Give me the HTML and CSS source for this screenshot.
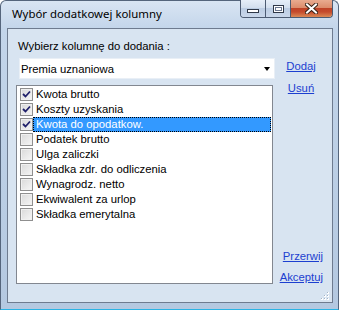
FILE: index.html
```html
<!doctype html>
<html lang="pl">
  <head>
    <meta charset="utf-8">
    <title>Wybór dodatkowej kolumny</title>
    <link rel="stylesheet" href="styles.css">
  </head>
  <body>
    <div class="window">
      <!-- pasek tytułu -->
      <div class="titlebar">
        <span class="title">Wybór dodatkowej kolumny</span>
        <div class="caption-buttons">
          <span class="cap-btn cap-min"><span class="min-glyph"></span></span>
          <span class="cap-btn cap-max"><span class="max-glyph"></span></span>
          <span class="cap-btn cap-close">
            <svg width="13" height="11" viewBox="0 0 13 11">
              <path d="M2 1.5 L11 9.5 M11 1.5 L2 9.5" stroke="#3a2418" stroke-width="4" stroke-linecap="square"/>
              <path d="M2 1.5 L11 9.5 M11 1.5 L2 9.5" stroke="#fff" stroke-width="2" stroke-linecap="square"/>
            </svg>
          </span>
        </div>
      </div>

      <!-- obszar klienta -->
      <div class="client">
        <div class="label">Wybierz kolumnę do dodania :</div>

        <div class="row">
          <div class="col-left">
            <div class="combo">
              <span>Premia uznaniowa</span>
              <span class="combo-arrow"></span>
            </div>

            <ul class="list">
              <li class="item"><span class="check checked"></span><span class="item-text">Kwota brutto</span></li>
              <li class="item"><span class="check checked"></span><span class="item-text">Koszty uzyskania</span></li>
              <li class="item"><span class="check checked"></span><span class="item-text selected">Kwota do opodatkow.</span></li>
              <li class="item"><span class="check"></span><span class="item-text">Podatek brutto</span></li>
              <li class="item"><span class="check"></span><span class="item-text">Ulga zaliczki</span></li>
              <li class="item"><span class="check"></span><span class="item-text">Składka zdr. do odliczenia</span></li>
              <li class="item"><span class="check"></span><span class="item-text">Wynagrodz. netto</span></li>
              <li class="item"><span class="check"></span><span class="item-text">Ekwiwalent za urlop</span></li>
              <li class="item"><span class="check"></span><span class="item-text">Składka emerytalna</span></li>
            </ul>
          </div>

          <div class="col-links">
            <div class="links-top">
              <a href="#">Dodaj</a>
              <a href="#">Usuń</a>
            </div>
            <div class="links-bottom">
              <a href="#">Przerwij</a>
              <a href="#">Akceptuj</a>
            </div>
          </div>
        </div>

        <!-- uchwyt zmiany rozmiaru -->
        <svg class="grip" width="8" height="8" viewBox="0 0 8 8">
          <rect x="6" y="0" width="2" height="2" fill="#fff"/>
          <rect x="3" y="3" width="2" height="2" fill="#fff"/>
          <rect x="6" y="3" width="2" height="2" fill="#fff"/>
          <rect x="0" y="6" width="2" height="2" fill="#fff"/>
          <rect x="3" y="6" width="2" height="2" fill="#fff"/>
          <rect x="6" y="6" width="2" height="2" fill="#fff"/>
          <rect x="6" y="0" width="1" height="1" fill="#a4b3c6"/>
          <rect x="3" y="3" width="1" height="1" fill="#a4b3c6"/>
          <rect x="6" y="3" width="1" height="1" fill="#a4b3c6"/>
          <rect x="0" y="6" width="1" height="1" fill="#a4b3c6"/>
          <rect x="3" y="6" width="1" height="1" fill="#a4b3c6"/>
          <rect x="6" y="6" width="1" height="1" fill="#a4b3c6"/>
        </svg>
      </div>
    </div>
  </body>
</html>
```

FILE: styles.css
```css
body {
  margin: 0;
  background-color: #fff;
  font-family: "Liberation Sans", Arial, sans-serif;
  font-size: 11.3px;
}
/* okno */
.window {
  width: 339px;
  height: 310px;
  box-sizing: border-box;
  display: flex;
  flex-direction: column;
  border: 1px solid #55657c;
  border-bottom-color: #2ab3e4;
  border-radius: 6px 6px 0 0;
  background: linear-gradient(#d9e5f3, #c3d5ea 28px, #b4c8e0);
}
/* pasek tytułu */
.titlebar {
  height: 27px;
  display: flex;
  align-items: flex-start;
  padding-left: 11px;
}
.title {
  margin-top: 5px;
  font-family: "Noto Sans", sans-serif;
  font-size: 11.4px;
  line-height: 16px;
  color: #000;
}
.caption-buttons {
  display: flex;
  margin-left: auto;
  margin-right: 5px;
  margin-top: -1px;
  height: 18px;
  box-sizing: border-box;
  border: 1px solid #4c5b72;
  border-top: 0;
  border-radius: 0 0 4px 4px;
  overflow: hidden;
}
.cap-btn {
  display: flex;
  align-items: center;
  justify-content: center;
  width: 24px;
  background: linear-gradient(#e6eef8, #d3dfee 45%, #bccde3 50%, #c9d7ea);
}
.cap-btn + .cap-btn {
  border-left: 1px solid #4c5b72;
}
.cap-close {
  width: 41px;
  background: linear-gradient(#e9ab90, #dc8c6c 45%, #bf4327 50%, #c54b2d 70%, #dc8a55);
}
.min-glyph {
  width: 12px;
  height: 4px;
  margin-top: 5px;
  box-sizing: border-box;
  border: 1px solid #2f3848;
  background-color: #fff;
}
.max-glyph {
  width: 11px;
  height: 8px;
  box-sizing: border-box;
  border: 1px solid #2f3848;
  background-color: #fff;
  box-shadow: inset 0 0 0 1px #fff, inset 0 0 0 2px #6b7890;
}
/* obszar klienta */
.client {
  flex: 1;
  position: relative;
  margin: 0 5px 6px 6px;
  border: 1px solid #6e7b8f;
  background-color: #d8e4f1;
}
.label {
  margin: 11px 0 0 10px;
  line-height: 13px;
  color: #000;
}
.row {
  display: flex;
  margin-top: 5px;
  padding-left: 8px;
}
.col-left {
  width: 259px;
}
/* lista rozwijana */
.combo {
  display: flex;
  align-items: center;
  justify-content: space-between;
  width: 256px;
  height: 21px;
  margin-left: 3px;
  box-sizing: border-box;
  padding: 0 4px 0 1px;
  border: 1px solid #e9eff6;
  background-color: #fff;
}
.combo-arrow {
  width: 0;
  height: 0;
  border-top: 4px solid #000;
  border-left: 3.5px solid transparent;
  border-right: 3.5px solid transparent;
}
/* lista z polami wyboru */
.list {
  width: 257px;
  height: 199px;
  margin: 6px 0 0;
  padding: 1px 0 0 3px;
  box-sizing: border-box;
  list-style-type: none;
  border: 1px solid #828790;
  background-color: #fff;
}
.item {
  display: flex;
  align-items: center;
  height: 15px;
}
.check {
  width: 13px;
  height: 13px;
  box-sizing: border-box;
  border: 1px solid #8f8f8f;
  background: linear-gradient(135deg, #d9d9d9, #f6f6f6);
  box-shadow: inset 0 0 0 1px #f0f0f0;
}
.check.checked {
  background: url("data:image/svg+xml,%3Csvg xmlns='http://www.w3.org/2000/svg' width='11' height='11'%3E%3Cpath d='M2 5 L4.5 7.5 L9 2.5' fill='none' stroke='%2321216b' stroke-width='1.8'/%3E%3C/svg%3E") no-repeat, linear-gradient(135deg, #d9d9d9, #f6f6f6);
}
.item-text {
  flex: 1;
  height: 15px;
  line-height: 15px;
  margin-right: 1px;
  padding-left: 3px;
  color: #000;
}
.item-text.selected {
  background-color: #3399ff;
  color: #fff;
  outline: 1px dotted #000;
  outline-offset: -1px;
}
/* odnośniki */
.col-links {
  flex: 1;
  display: flex;
  flex-direction: column;
  justify-content: space-between;
  padding: 2px 9px 0 4px;
}
.links-top {
  display: flex;
  flex-direction: column;
  align-items: center;
  gap: 9px;
}
.links-bottom {
  display: flex;
  flex-direction: column;
  align-items: flex-end;
  gap: 8px;
}
.col-links a {
  line-height: 13px;
  color: #1c3fd0;
  text-decoration: underline;
}
.grip {
  position: absolute;   /* leży w rogu nad tłem */
  right: 3px;
  bottom: 2px;
}
```
